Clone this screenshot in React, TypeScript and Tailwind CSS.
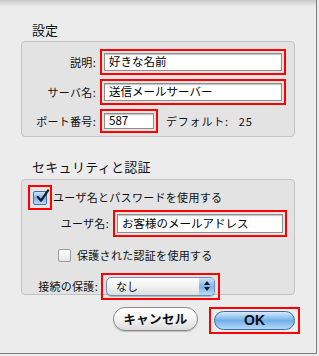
import React from "react";

const jp = { fontFamily: '"Noto Sans CJK JP", "Liberation Sans", sans-serif' };

function RedBox({ className = "", children }: { className?: string; children?: React.ReactNode }) {
  return <div className={`border-2 border-[#ff0000] ${className}`}>{children}</div>;
}

function Field({ value }: { value: string }) {
  return (
    <div className="flex h-full items-center border border-[#8f8f8f] bg-white pl-[4px] text-[11.5px] text-black shadow-[inset_0_1px_1px_rgba(0,0,0,0.25)]">
      {value}
    </div>
  );
}

function CheckedBox() {
  return (
    <div className="relative h-[14px] w-[14px] rounded-[2px] border border-[#4a6f9a] bg-gradient-to-b from-[#cfe4f8] via-[#7fb2e6] to-[#b6d8f7]">
      <svg viewBox="0 0 16 16" className="absolute left-[1px] top-[-3px] h-[15px] w-[15px]">
        <path d="M3 8.5 L6.5 12.5 L14 1.5" fill="none" stroke="#1a1a2a" strokeWidth="2.4" strokeLinecap="round" strokeLinejoin="round" />
      </svg>
    </div>
  );
}

export default function App() {
  return (
    <div className="h-[356px] w-[319px] overflow-hidden bg-[#ececec] text-[#111]" style={jp}>
      <div className="flex h-[354px] w-[317px] flex-col border-b border-r border-[#7d7d7d]">
        {/* top band */}
        <div className="h-[6px] bg-gradient-to-b from-[#c8c8c8] to-[#e9e9e9]" />

        {/* 設定 */}
        <div className="mt-[16px] pl-[32px] text-[13px] leading-[16px]">設定</div>
        <div className="ml-[21px] mt-[3px] flex h-[96px] w-[274px] flex-col gap-[4px] rounded-[4px] border border-[#c4c4c4] bg-[#e3e3e3] pt-[7px]">
          <div className="flex items-center">
            <div className="w-[74px] text-right text-[11px] tracking-[0.3px]">説明:</div>
            <RedBox className="ml-[4px] h-[26px] w-[186px] p-[2px]">
              <Field value="好きな名前" />
            </RedBox>
          </div>
          <div className="flex items-center">
            <div className="w-[74px] text-right text-[11px] tracking-[0.3px]">サーバ名:</div>
            <RedBox className="ml-[4px] h-[26px] w-[186px] p-[2px]">
              <Field value="送信メールサーバー" />
            </RedBox>
          </div>
          <div className="flex items-center">
            <div className="w-[74px] text-right text-[11px] tracking-[0.3px]">ポート番号:</div>
            <RedBox className="ml-[4px] h-[24px] w-[58px] p-[2px]">
              <Field value="587" />
            </RedBox>
            <div className="ml-[8px] text-[11px] tracking-[0.8px]">デフォルト:</div>
            <div className="ml-[10px] text-[11px] tracking-[0.8px]">25</div>
          </div>
        </div>

        {/* セキュリティと認証 */}
        <div className="mt-[22px] pl-[32px] text-[13px] leading-[16px] tracking-[0.3px]">セキュリティと認証</div>
        <div className="ml-[21px] mt-[4px] flex h-[116px] w-[274px] flex-col rounded-[4px] border border-[#c4c4c4] bg-[#e3e3e3] pt-[5px]">
          <div className="flex items-center pl-[6px]">
            <RedBox className="flex h-[25px] w-[24px] items-center justify-center">
              <CheckedBox />
            </RedBox>
            <div className="ml-[1px] text-[11px] tracking-[0.3px]">ユーザ名とパスワードを使用する</div>
          </div>
          <div className="flex items-center">
            <div className="w-[87px] text-right text-[11px] tracking-[0.3px]">ユーザ名:</div>
            <RedBox className="ml-[4px] h-[27px] w-[174px] p-[2px]">
              <Field value="お客様のメールアドレス" />
            </RedBox>
          </div>
          <div className="mt-[10px] flex items-center pl-[36px]">
            <div className="h-[13px] w-[13px] rounded-[2px] border border-[#9a9a9a] bg-gradient-to-b from-[#ffffff] to-[#e6e6e6]" />
            <div className="ml-[6px] text-[11px] tracking-[0.3px]">保護された認証を使用する</div>
          </div>
          <div className="mt-[9px] flex items-center">
            <div className="w-[76px] text-right text-[11px] tracking-[0.3px]">接続の保護:</div>
            <RedBox className="ml-[3px] h-[27px] w-[119px] px-[3px] py-[2px]">
              <div className="flex h-full items-center overflow-hidden rounded-[5px] border border-[#6d8fb8] bg-gradient-to-b from-[#ffffff] via-[#f1f1f1] to-[#dedede] shadow-[0_1px_1px_rgba(0,0,0,0.25)]">
                <div className="flex-1 pl-[9px] text-[11px]">なし</div>
                <div className="flex h-full w-[15px] flex-col items-center justify-center gap-[2px] bg-gradient-to-b from-[#cfe4f8] via-[#7db3ea] to-[#b7d9f8]">
                  <svg viewBox="0 0 6 4" className="h-[4px] w-[6px]"><path d="M3 0 L6 4 L0 4 Z" fill="#1a1a1a" /></svg>
                  <svg viewBox="0 0 6 4" className="h-[4px] w-[6px]"><path d="M0 0 L6 0 L3 4 Z" fill="#1a1a1a" /></svg>
                </div>
              </div>
            </RedBox>
          </div>
        </div>

        {/* buttons */}
        <div className="mt-[12px] flex items-start pl-[113px]">
          <div className="flex h-[24px] w-[85px] items-center justify-center rounded-full border border-[#8a8a8a] bg-gradient-to-b from-[#ffffff] via-[#f3f3f3] to-[#dcdcdc] text-[12.5px] font-bold tracking-[0.3px] shadow-[0_1px_1px_rgba(0,0,0,0.2)]">
            キャンセル
          </div>
          <RedBox className="ml-[11px] h-[27px] w-[91px] px-[3px] py-[2px]">
            <div
              className="flex h-full items-center justify-center rounded-full border border-[#3f6c9e] bg-gradient-to-b from-[#d6eafb] via-[#72aee9] to-[#b3dafa] text-[14px] font-bold text-[#111]"
              style={{ fontFamily: '"Liberation Sans", sans-serif' }}
            >
              OK
            </div>
          </RedBox>
        </div>
      </div>
    </div>
  );
}
